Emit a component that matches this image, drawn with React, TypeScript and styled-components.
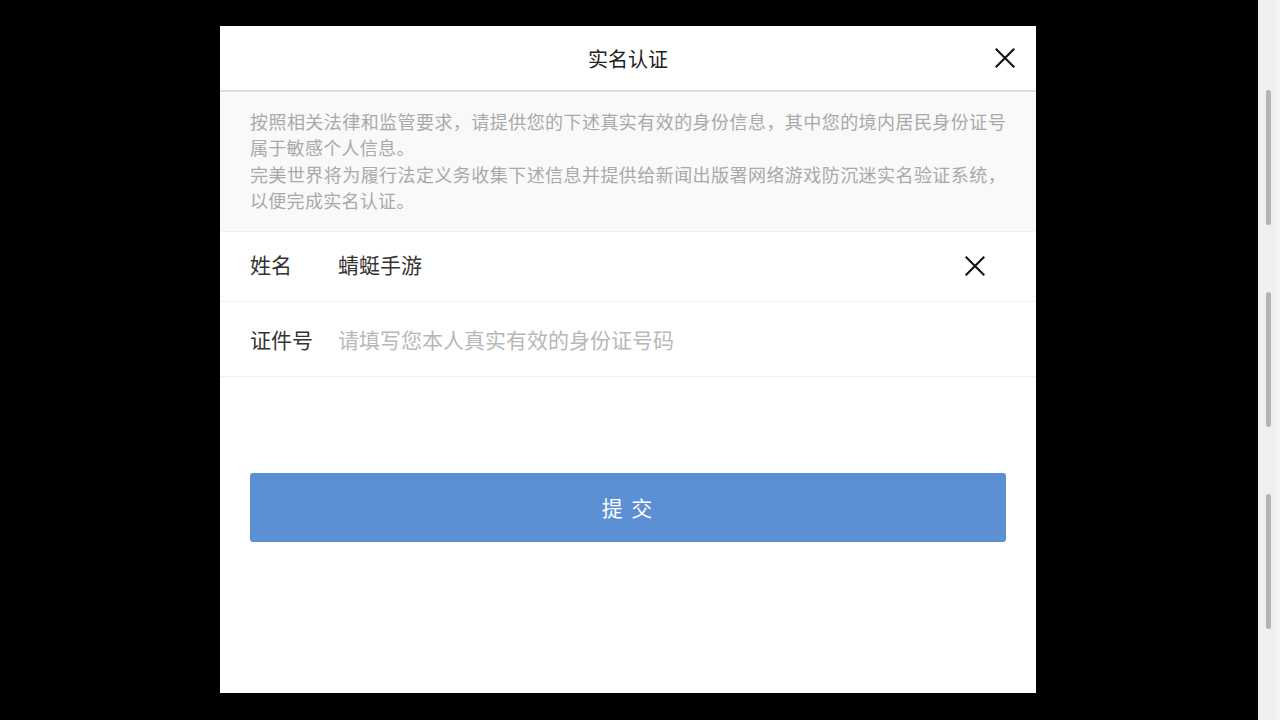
import React from "react";
import styled, { createGlobalStyle } from "styled-components";

const GlobalStyle = createGlobalStyle`
  html, body {
    margin: 0;
    padding: 0;
    width: 100%;
    height: 100%;
    background: #000;
    overflow: hidden;
  }
  body {
    font-family: "Noto Sans CJK SC", "Noto Sans", sans-serif;
  }
  #root { height: 100%; }
  * { box-sizing: border-box; }
`;

const Screen = styled.div`
  display: flex;
  width: 1280px;
  height: 720px;
  background: #000;
`;

const Stage = styled.div`
  flex: 1;
  display: flex;
  align-items: flex-start;
  justify-content: center;
  padding: 26px 2px 0 0;
`;

const ScrollStrip = styled.div`
  width: 22px;
  height: 100%;
  background: #efefef;
  border-right: 4px solid #f4f4f4;
  display: flex;
  flex-direction: column;
  align-items: flex-start;
  padding: 90px 0 0 8px;
  gap: 67px;
`;

const Thumb = styled.div`
  width: 5px;
  height: 135px;
  border-radius: 3px;
  background: #b4b4b4;
`;

const Modal = styled.div`
  width: 816px;
  height: 667px;
  background: #fff;
  display: flex;
  flex-direction: column;
`;

const Header = styled.div`
  position: relative;
  height: 66px;
  flex-shrink: 0;
  display: flex;
  align-items: center;
  justify-content: center;
  border-bottom: 2px solid #dedede;
`;

const Title = styled.div`
  font-size: 20px;
  color: #222;
  line-height: 1;
  margin-top: 1px;
`;

const IconButton = styled.button<{ $right: number }>`
  position: absolute;
  right: ${(p) => p.$right}px;
  top: 50%;
  transform: translateY(-50%);
  width: 26px;
  height: 26px;
  padding: 0;
  border: none;
  background: none;
  display: flex;
  align-items: center;
  justify-content: center;
  cursor: pointer;
`;

const Notice = styled.div`
  background: #f9f9f9;
  padding: 16px 30px 17px;
  font-size: 18px;
  line-height: 26.4px;
  letter-spacing: 0.3px;
  color: #a9a9a9;
  text-align: justify;
  border-bottom: 1px solid #f0f0f0;
`;

const Row = styled.div<{ $h: number; $lift?: number }>`
  position: relative;
  height: ${(p) => p.$h}px;
  flex-shrink: 0;
  display: flex;
  align-items: center;
  padding: 0 30px ${(p) => (p.$lift ?? 0) * 2}px;
  border-bottom: 1px solid #f1f1f1;
  font-size: 21px;
`;

const Label = styled.div`
  width: 88px;
  color: #333;
  flex-shrink: 0;
`;

const Value = styled.div<{ $placeholder?: boolean }>`
  flex: 1;
  color: ${(p) => (p.$placeholder ? "#b8b8b8" : "#333")};
`;

const Body = styled.div`
  padding: 96px 30px 0;
`;

const Submit = styled.button`
  width: 100%;
  height: 69px;
  border: none;
  border-radius: 3px;
  background: #5b90d4;
  color: #fff;
  font-family: "Noto Sans CJK SC", "Noto Sans", sans-serif;
  font-size: 21px;
  letter-spacing: 2px;
  padding: 0;
  cursor: pointer;
`;

const CloseIcon: React.FC<{ size: number; stroke: number }> = ({ size, stroke }) => (
  <svg width={size} height={size} viewBox="0 0 20 20">
    <path d="M1.5 1.5 L18.5 18.5 M18.5 1.5 L1.5 18.5" stroke="#111" strokeWidth={stroke} strokeLinecap="square" fill="none" />
  </svg>
);

export default function App() {
  return (
    <>
      <GlobalStyle />
      <Screen>
        <Stage>
          <Modal>
            <Header>
              <Title>实名认证</Title>
              <IconButton $right={18} aria-label="关闭">
                <CloseIcon size={20} stroke={2.1} />
              </IconButton>
            </Header>
            <Notice>
              按照相关法律和监管要求，请提供您的下述真实有效的身份信息，其中您的境内居民身份证号属于敏感个人信息。
              <br />
              完美世界将为履行法定义务收集下述信息并提供给新闻出版署网络游戏防沉迷实名验证系统，以便完成实名认证。
            </Notice>
            <Row $h={70} $lift={2}>
              <Label>姓名</Label>
              <Value>蜻蜓手游</Value>
              <IconButton $right={48} aria-label="清除">
                <CloseIcon size={20} stroke={2.1} />
              </IconButton>
            </Row>
            <Row $h={75}>
              <Label>证件号</Label>
              <Value $placeholder>请填写您本人真实有效的身份证号码</Value>
            </Row>
            <Body>
              <Submit>提 交</Submit>
            </Body>
          </Modal>
        </Stage>
        <ScrollStrip>
          <Thumb />
          <Thumb />
          <Thumb />
        </ScrollStrip>
      </Screen>
    </>
  );
}
